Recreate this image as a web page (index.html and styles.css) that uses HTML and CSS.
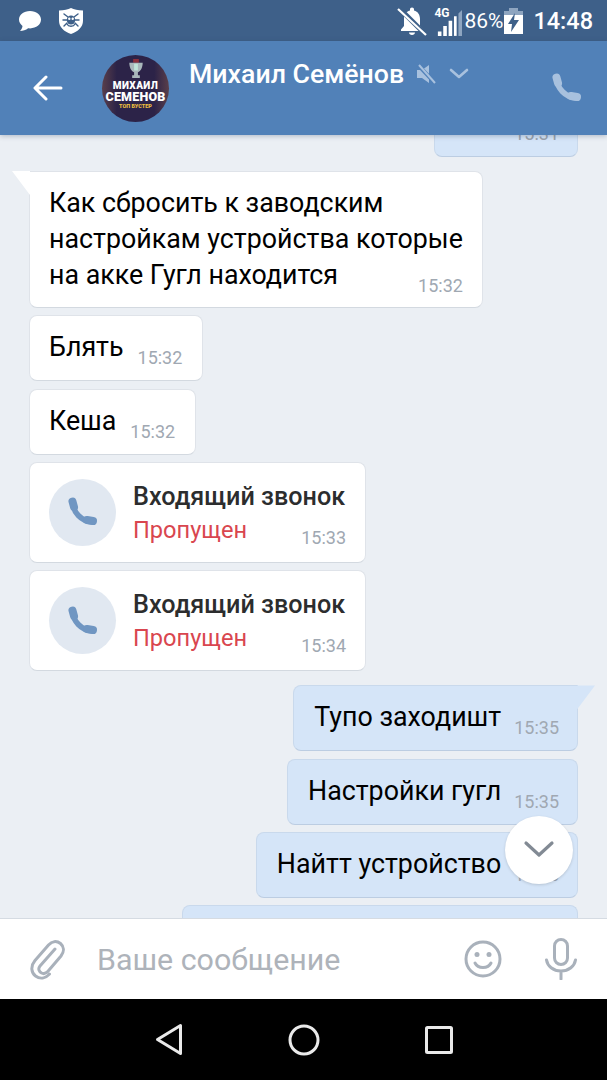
FILE: index.html

```html
<!DOCTYPE html>
<html lang="ru">
<head>
  <meta charset="UTF-8">
  <title>Михаил Семёнов</title>
  <link rel="stylesheet" href="styles.css">
</head>
<body>
  <div class="phone">

    <div class="status-bar">
      <svg class="st-chat" viewBox="0 0 24 22"><path d="M12 1C5.600 1 1 4.700 1 9.600c0 2.700 1.400 4.800 3.500 6.300-.2 1.900-1.200 3.600-2.500 5 3 0 5.900-.8 8.100-2.600.6.100 1.300.1 1.900.1 6.400 0 11-3.900 11-8.800S18.400 1 12 1z" fill="#fff"/></svg>
      <svg class="st-shield" viewBox="0 0 24 26"><path d="M12 0c3 1.600 7 2.400 12 2.400v10.300C24 19 19 23.500 12 26 5 23.500 0 19 0 12.700V2.400C5 2.400 9 1.600 12 0z" fill="#fff"/><g fill="none" stroke="#3e6089" stroke-width="1.400" stroke-linecap="round"><path d="M9 9 5 6M15 9l4-3M8 12H4M16 12h4M8 15l-3 3M16 15l3 3"/><path d="M8 16c1.500 3 6.500 3 8 0"/></g><ellipse cx="12" cy="12" rx="4.200" ry="4.600" fill="#3e6089"/><circle cx="10.300" cy="10.800" r="1.200" fill="#fff"/><circle cx="13.700" cy="10.800" r="1.200" fill="#fff"/></svg>
      <div class="st-right">
        <svg class="st-bell" viewBox="0 0 30 30"><path d="M15 1.500c-1.300 0-2 .9-2 2v1C8.900 5.500 7 9 7 13v7l-3 3.500v1.500h22v-1.500L23 20v-7c0-4-1.900-7.500-6-8.500v-1c0-1.100-.7-2-2-2z" fill="#fff"/><path d="M12 26.500h6c0 1.300-1.300 2.500-3 2.500s-3-1.200-3-2.500z" fill="#fff"/><path d="M2 2l26 26" stroke="#3e6089" stroke-width="5"/><path d="M1 3l28 26" stroke="#fff" stroke-width="2.200"/></svg>
        <div class="st-net">
          <span class="st-4g">4G</span>
          <svg class="st-signal" viewBox="0 0 28 30"><path d="M1 30h4v-5H1zM7 30h4V19H7zM13 30h4V13h-4z" fill="#fff"/><path d="M19 30h3V8h-3z" fill="#fff"/><path d="M24 30h4V1l-4 4z" fill="#8ea5c0"/></svg>
        </div>
        <span class="st-pct">86%</span>
        <svg class="st-batt" viewBox="0 0 19 26"><path d="M5 0h9v3H5z" fill="#8ea5c0"/><path d="M0 3h19v4H0z" fill="#8ea5c0"/><path d="M0 7h19v19H0z" fill="#fff"/><path d="M11 5 4 16h4l-1 8 8-12h-5z" fill="#3e6089"/></svg>
        <span class="st-time">14:48</span>
      </div>
    </div>

    <div class="app-header">
      <svg class="back-icon" viewBox="0 0 30 26"><path d="M28 13H3M13 2 2 13l11 11" fill="none" stroke="#fff" stroke-width="3" stroke-linecap="round" stroke-linejoin="round"/></svg>
      <div class="avatar">
        <svg class="avatar-cup" viewBox="0 0 16 22"><path d="M5 0h6v4H5z" fill="#8c2f3c"/><path d="M1 4h14c0 5-2 9-5 10v3h2v3H4v-3h2v-3C3 13 1 9 1 4z" fill="#a9b7bb"/><path d="M6 5h4v7H6z" fill="#bfe3d8"/></svg>
        <span class="avatar-l1">МИХАИЛ</span>
        <span class="avatar-l2">СЕМЕНОВ</span>
        <span class="avatar-l3">ТОП БУСТЕР</span>
      </div>
      <div class="peer">
        <span class="peer-name">Михаил Семёнов</span>
        <svg class="peer-mute" viewBox="0 0 20 20"><path d="M1 6h5l7-5v18l-7-5H1z" fill="#a8c1de"/><path d="M2 1l17 18" stroke="#5181b8" stroke-width="4"/><path d="M3 1l16 18" stroke="#a8c1de" stroke-width="2"/></svg>
        <svg class="peer-chevron" viewBox="0 0 20 12"><path d="M2 2l8 7 8-7" fill="none" stroke="#a8c1de" stroke-width="2.600" stroke-linecap="round" stroke-linejoin="round"/></svg>
      </div>
      <svg class="call-icon" viewBox="0 0 30 30"><g fill="none" stroke="#a8c1de" stroke-linecap="round"><path d="M5 6c0 9 8 18 19 19" stroke-width="5.500"/><path d="M4.500 4.500 6 10" stroke-width="8"/><path d="M19 23l6 1" stroke-width="8"/></g></svg>
    </div>

    <div class="chat">
      <div class="msg msg-out msg-first"><span class="msg-time">15:31</span></div>

      <div class="msg msg-in msg-long msg-tail-in">
        <div class="msg-text">Как сбросить к заводским<br>настройкам устройства которые<br>на акке Гугл находится</div>
        <span class="msg-time">15:32</span>
      </div>
      <div class="msg msg-in"><span class="msg-text">Блять</span><span class="msg-time">15:32</span></div>
      <div class="msg msg-in"><span class="msg-text">Кеша</span><span class="msg-time">15:32</span></div>

      <div class="msg msg-in msg-call">
        <div class="call-circle">
          <svg class="call-glyph" viewBox="0 0 30 30"><g fill="none" stroke="#7096c2" stroke-linecap="round"><path d="M5 6c0 9 8 18 19 19" stroke-width="5.500"/><path d="M4.500 4.500 6 10" stroke-width="8"/><path d="M19 23l6 1" stroke-width="8"/></g></svg>
        </div>
        <div class="call-info">
          <div class="call-title">Входящий звонок</div>
          <div class="call-state">Пропущен</div>
          <span class="msg-time">15:33</span>
        </div>
      </div>
      <div class="msg msg-in msg-call">
        <div class="call-circle">
          <svg class="call-glyph" viewBox="0 0 30 30"><g fill="none" stroke="#7096c2" stroke-linecap="round"><path d="M5 6c0 9 8 18 19 19" stroke-width="5.500"/><path d="M4.500 4.500 6 10" stroke-width="8"/><path d="M19 23l6 1" stroke-width="8"/></g></svg>
        </div>
        <div class="call-info">
          <div class="call-title">Входящий звонок</div>
          <div class="call-state">Пропущен</div>
          <span class="msg-time">15:34</span>
        </div>
      </div>

      <div class="msg msg-out msg-tail-out msg-group-start"><span class="msg-text">Тупо заходишт</span><span class="msg-time">15:35</span></div>
      <div class="msg msg-out"><span class="msg-text">Настройки гугл</span><span class="msg-time">15:35</span></div>
      <div class="msg msg-out"><span class="msg-text">Найтт устройство</span><span class="msg-time">15:35</span></div>
      <div class="msg msg-out msg-cut"></div>

      <div class="scroll-down">
        <svg viewBox="0 0 32 20"><path d="M3 3l13 12L29 3" fill="none" stroke="#828a94" stroke-width="3.200" stroke-linecap="round" stroke-linejoin="round"/></svg>
      </div>
    </div>

    <div class="composer">
      <svg class="attach-icon" viewBox="0 0 36 42"><path d="M25 11 10 28c-2.500 3-.5 6 1.500 7 2.500 1.300 4.500.5 6.500-1.700L31 18c3.500-4.500 3-9.500-.5-12.500-3.800-3-8.500-2.500-12 1.500L5 22.500c-5 6-3.500 12.500.5 15.500 4.500 3.300 10 2.500 14-2" fill="none" stroke="#a9b1bb" stroke-width="3" stroke-linecap="round"/></svg>
      <span class="composer-placeholder">Ваше сообщение</span>
      <svg class="smile-icon" viewBox="0 0 38 38"><circle cx="19" cy="19" r="17" fill="none" stroke="#a9b1bb" stroke-width="3"/><circle cx="13" cy="14.500" r="2.500" fill="#a9b1bb"/><circle cx="25" cy="14.500" r="2.500" fill="#a9b1bb"/><path d="M11 23c3 6 13 6 16 0" fill="none" stroke="#a9b1bb" stroke-width="3" stroke-linecap="round"/></svg>
      <svg class="mic-icon" viewBox="0 0 32 42"><rect x="9.500" y="1.500" width="13" height="25" rx="6.500" fill="none" stroke="#a9b1bb" stroke-width="3"/><path d="M1.500 22c1 6 6.500 11 14.500 11s13.500-5 14.500-11M16 33v8" fill="none" stroke="#a9b1bb" stroke-width="3" stroke-linecap="round"/></svg>
    </div>

    <div class="nav-bar">
      <svg class="nav-back" viewBox="0 0 28 33"><path d="M25.500 2.500v28L2.500 16.500z" fill="none" stroke="#eaeaea" stroke-width="3" stroke-linejoin="round"/></svg>
      <svg class="nav-home" viewBox="0 0 32 32"><circle cx="16" cy="16" r="14" fill="none" stroke="#eaeaea" stroke-width="3"/></svg>
      <svg class="nav-recent" viewBox="0 0 28 28"><rect x="1.500" y="1.500" width="25" height="25" rx="1" fill="none" stroke="#eaeaea" stroke-width="3"/></svg>
    </div>

  </div>
</body>
</html>
```

FILE: styles.css

```css
* {
  box-sizing: border-box;
}
body {
  margin: 0;
  font-family: Roboto, 'Noto Sans', sans-serif;
  background: #000;
}
.phone {
  width: 607px;
  height: 1080px;
  display: flex;
  flex-direction: column;
  overflow: hidden;
}
svg {
  display: block;
  flex: none;
}

/* status bar */
.status-bar {
  height: 41px;
  background: #3e6089;
  display: flex;
  align-items: center;
  padding: 0 14px 0 18px;
  color: #fff;
}
.st-chat {
  width: 24px;
  height: 22px;
}
.st-shield {
  width: 24px;
  height: 26px;
  margin-left: 17px;
}
.st-right {
  margin-left: auto;
  display: flex;
  align-items: center;
}
.st-bell {
  width: 30px;
  height: 30px;
}
.st-net {
  position: relative;
  width: 28px;
  height: 30px;
  margin-left: 7px;
}
.st-4g {
  position: absolute;
  left: 0;
  top: 1px;
  font-size: 12px;
  line-height: 12px;
  font-weight: 700;
}
.st-signal {
  position: absolute;
  left: 3px;
  top: 3px;
  width: 25px;
  height: 27px;
}
.st-pct {
  font-size: 21px;
  margin-left: 2px;
}
.st-batt {
  width: 19px;
  height: 26px;
  margin-left: 1px;
}
.st-time {
  font-size: 23.5px;
  font-weight: 500;
  margin-left: 10px;
}

/* header */
.app-header {
  height: 94px;
  background: #5181b8;
  display: flex;
  align-items: center;
  padding: 0 25px 0 33px;
  position: relative;
  z-index: 2;
  box-shadow: 0 1px 5px rgba(40, 60, 90, .3);
}
.back-icon {
  width: 30px;
  height: 26px;
}
.avatar {
  width: 67px;
  height: 67px;
  margin-left: 39px;
  border-radius: 50%;
  background: linear-gradient(90deg, #5a3f4a, #2c2348 22%, #2c2348 78%, #5a3f4a);
  display: flex;
  flex-direction: column;
  align-items: center;
  color: #fff;
  font-weight: 900;
  line-height: 1;
  overflow: hidden;
}
.avatar-cup {
  width: 16px;
  height: 21px;
  margin-top: 4px;
}
.avatar-l1 {
  font-size: 10px;
  letter-spacing: .4px;
  margin-top: 1px;
}
.avatar-l2 {
  font-size: 12.5px;
  letter-spacing: .2px;
}
.avatar-l3 {
  font-size: 5.5px;
  color: #eebf3f;
  margin-top: 1px;
}
.peer {
  display: flex;
  align-items: center;
  margin-left: 20px;
  margin-bottom: 29px;
}
.peer-name {
  font-size: 26.7px;
  font-weight: 500;
  color: #fff;
}
.peer-mute {
  width: 20px;
  height: 20px;
  margin-left: 12px;
}
.peer-chevron {
  width: 20px;
  height: 12px;
  margin-left: 13px;
}
.call-icon {
  width: 30px;
  height: 30px;
  margin-left: auto;
}

/* messages */
.chat {
  height: 783px;
  background: #ebeff4;
  display: flex;
  flex-direction: column;
  gap: 7.3px;
  padding: 0 29px;
  position: relative;
  overflow: hidden;
}
.msg {
  display: flex;
  align-items: flex-end;
  gap: 14px;
  height: 66px;
  padding: 0 20px 0 19px;
  border-radius: 8px;
  border: 1px solid transparent;
  font-size: 26.8px;
  position: relative;
  flex: none;
}
.msg-in {
  align-self: flex-start;
  background: #fff;
  border-color: #dfe3e9;
  border-bottom-color: #d3d9e0;
}
.msg-out {
  align-self: flex-end;
  gap: 13px;
  padding: 0 18px 0 20px;
  background: #d5e5f8;
  border-color: #c9d9ec;
  border-bottom-color: #bccde2;
}
.msg-text {
  color: #000;
  line-height: 36px;
  padding-bottom: 15px;
  white-space: nowrap;
}
.msg-time {
  font-size: 18px;
  line-height: 22px;
  color: #a0a8b2;
  padding-bottom: 11px;
}
.msg-first {
  width: 144px;
  margin-top: -44px;
  justify-content: flex-end;
}
.msg-first .msg-time {
  color: #99a2ad;
}
.msg-long {
  display: block;
  height: 137px;
  margin-top: 6.7px;
  padding: 13px 19px 0 19px;
  border-top-left-radius: 0;
}
.msg-long .msg-text {
  padding-bottom: 0;
}
.msg-long .msg-time {
  display: block;
  text-align: right;
  margin-top: -18px;
}
.msg-tail-in::before {
  content: '';
  position: absolute;
  left: -18px;
  top: -1px;
  width: 18px;
  height: 24px;
  background: #fff;
  clip-path: polygon(0 0, 100% 0, 100% 100%);
}
.msg-tail-out::after {
  content: '';
  position: absolute;
  right: -18px;
  top: -1px;
  width: 18px;
  height: 24px;
  background: #d5e5f8;
  clip-path: polygon(0 0, 100% 0, 0 100%);
}
.msg-group-start {
  margin-top: 7px;
  border-top-right-radius: 0;
}
.msg-cut {
  width: 396px;
}

/* call cards */
.msg-call {
  width: 337px;
  height: 101px;
  padding: 0 19px;
  align-items: center;
  gap: 17px;
}
.call-circle {
  width: 67px;
  height: 67px;
  border-radius: 50%;
  background: #e1e8f1;
  display: flex;
  align-items: center;
  justify-content: center;
  flex: none;
}
.call-glyph {
  width: 30px;
  height: 30px;
}
.call-info {
  flex: 1;
  position: relative;
  height: 100%;
  padding-top: 16px;
}
.call-title {
  font-size: 25.2px;
  font-weight: 500;
  line-height: 36px;
  color: #2c2d2e;
  white-space: nowrap;
}
.call-state {
  font-size: 23.6px;
  line-height: 30px;
  color: #d9464f;
}
.call-info .msg-time {
  position: absolute;
  right: 0;
  bottom: 0;
  padding-bottom: 13px;
}

/* scroll button */
.scroll-down {
  position: absolute;
  right: 34px;
  top: 681px;
  width: 68px;
  height: 68px;
  border-radius: 50%;
  background: #fff;
  box-shadow: 0 1px 3px rgba(0, 0, 0, .15);
  display: flex;
  align-items: center;
  justify-content: center;
}
.scroll-down svg {
  width: 32px;
  height: 20px;
}

/* composer */
.composer {
  height: 81px;
  background: #fff;
  border-top: 1px solid #d5dbe2;
  display: flex;
  align-items: center;
  padding: 0 30px;
}
.attach-icon {
  width: 36px;
  height: 42px;
}
.composer-placeholder {
  font-size: 30.4px;
  color: #aeb3ba;
  margin-left: 31px;
}
.smile-icon {
  width: 38px;
  height: 38px;
  margin-left: auto;
}
.mic-icon {
  width: 32px;
  height: 42px;
  margin-left: 43px;
}

/* android nav */
.nav-bar {
  height: 81px;
  background: #000;
  display: flex;
  align-items: center;
  padding: 0 0 0 155px;
}
.nav-back {
  width: 28px;
  height: 33px;
}
.nav-home {
  width: 32px;
  height: 32px;
  margin-left: 105px;
}
.nav-recent {
  width: 28px;
  height: 28px;
  margin-left: 105px;
}
```
